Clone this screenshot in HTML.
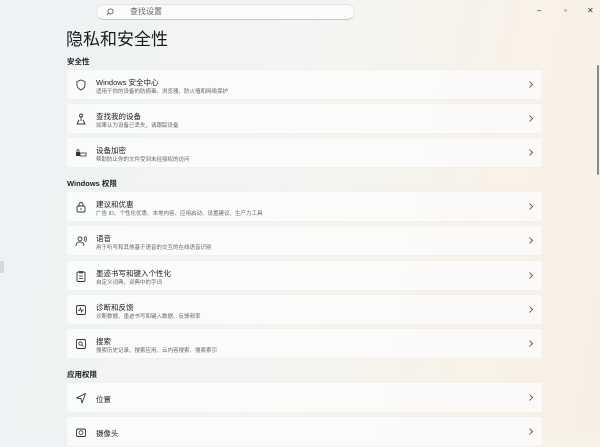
<!DOCTYPE html>
<html><head><meta charset="utf-8"><style>
*{margin:0;padding:0;box-sizing:border-box}
body{width:600px;height:434px;overflow:hidden;font-family:"Liberation Sans","Noto Sans CJK SC",sans-serif;color:#1a1a1a;
background:linear-gradient(100deg,#eef2f5 0%,#f3f4f3 45%,#f8f2e8 80%,#f6efe4 100%);position:relative}
.search{position:absolute;left:96px;top:4px;width:259px;height:16px;background:#fbfbfb;border-radius:8px;border:1px solid #e3e3e3;border-bottom-color:#c9c9c9;font-size:8px;color:#666;padding-left:33px;line-height:14px}
.search svg{position:absolute;left:9px;top:3px}
.wc{position:absolute;top:6px;font-size:8px;color:#333}
h1{position:absolute;left:66px;top:25px;font-size:17px;font-weight:normal;color:#1a1a1a}
.sec{position:absolute;left:67px;font-size:7.5px;font-weight:bold;color:#222}
.card{position:absolute;left:66px;width:477px;height:31px;background:rgba(252,252,252,.85);border-radius:3px;border:1px solid rgba(0,0,0,.04)}
.card .ic{position:absolute;left:8px;top:9px;width:12px;height:12px}
.t{position:absolute;left:29px;top:7px;font-size:7.5px;color:#1a1a1a}
.s{position:absolute;left:29px;top:17px;font-size:5.5px;color:#666}
.t1{top:11px}
.chev{position:absolute;right:9px;top:11px;width:4px;height:7px}
.sb{position:absolute;left:597px;top:65px;width:2px;height:110px;background:#8a8a8a;border-radius:1px}
.nav{position:absolute;left:0;top:261px;width:4px;height:12px;background:#d8d8d8}
</style></head><body>
<div class="search"><svg width="8" height="8" viewBox="0 0 8 8"><circle cx="4.5" cy="3.5" r="2.6" fill="none" stroke="#555" stroke-width=".8"/><path d="M2.6 5.4L.8 7.2" stroke="#555" stroke-width=".8"/></svg>查找设置</div>
<div class="wc" style="left:537px">–</div><div class="wc" style="left:564px">▫</div><div class="wc" style="left:587px">✕</div>
<div class="nav"></div>
<h1>隐私和安全性</h1>
<div class="sec" style="top:56px">安全性</div>
<div class="sec" style="top:178px">Windows 权限</div>
<div class="sec" style="top:369px">应用权限</div>
<div class="sb"></div>

<div class="card" style="top:69px"><svg class="ic" viewBox="0 0 12 12"><path d="M6 1L10 2.5V6C10 8.5 8 10 6 11 4 10 2 8.5 2 6V2.5Z" fill="none" stroke="#333" stroke-width=".9"/></svg><div class="t">Windows 安全中心</div><div class="s">适用于你的设备的防病毒、浏览器、防火墙和网络保护</div><svg class="chev" viewBox="0 0 4 7"><path d="M.5.5L3.5 3.5.5 6.5" fill="none" stroke="#444" stroke-width=".8"/></svg></div>
<div class="card" style="top:103px"><svg class="ic" viewBox="0 0 12 12"><circle cx="6" cy="2.5" r="1.5" fill="none" stroke="#333" stroke-width=".9"/><path d="M6 4V8M2 11H10L8 7M4 7L2 11" fill="none" stroke="#333" stroke-width=".9"/></svg><div class="t">查找我的设备</div><div class="s">如果认为设备已丢失，请跟踪设备</div><svg class="chev" viewBox="0 0 4 7"><path d="M.5.5L3.5 3.5.5 6.5" fill="none" stroke="#444" stroke-width=".8"/></svg></div>
<div class="card" style="top:137px"><svg class="ic" viewBox="0 0 12 12"><rect x="1" y="5" width="4" height="4" fill="#333"/><rect x="5" y="6" width="6" height="3" fill="none" stroke="#333" stroke-width=".8"/><path d="M2 5V3.5A1 1 0 0 1 4 3.5V5" fill="none" stroke="#333" stroke-width=".8"/></svg><div class="t">设备加密</div><div class="s">帮助防止你的文件受到未经授权的访问</div><svg class="chev" viewBox="0 0 4 7"><path d="M.5.5L3.5 3.5.5 6.5" fill="none" stroke="#444" stroke-width=".8"/></svg></div>

<div class="card" style="top:191px"><svg class="ic" viewBox="0 0 12 12"><rect x="2" y="5" width="8" height="6" rx="1.5" fill="none" stroke="#333" stroke-width=".9"/><path d="M4 5V3.5A2 2 0 0 1 8 3.5V5" fill="none" stroke="#333" stroke-width=".9"/><circle cx="6" cy="8" r=".7" fill="#333"/></svg><div class="t">建议和优惠</div><div class="s">广告 ID、个性化优惠、本地内容、应用启动、设置建议、生产力工具</div><svg class="chev" viewBox="0 0 4 7"><path d="M.5.5L3.5 3.5.5 6.5" fill="none" stroke="#444" stroke-width=".8"/></svg></div>
<div class="card" style="top:225px"><svg class="ic" viewBox="0 0 12 12"><circle cx="5" cy="4" r="2" fill="none" stroke="#333" stroke-width=".9"/><path d="M1 11C1 8 3 7 5 7S9 8 9 11M9 2Q10.5 4 9 6M10.5 1Q12.5 4 10.5 7" fill="none" stroke="#333" stroke-width=".8"/></svg><div class="t">语音</div><div class="s">用于听写和其他基于语音的交互的在线语音识别</div><svg class="chev" viewBox="0 0 4 7"><path d="M.5.5L3.5 3.5.5 6.5" fill="none" stroke="#444" stroke-width=".8"/></svg></div>
<div class="card" style="top:260px"><svg class="ic" viewBox="0 0 12 12"><rect x="2" y="2" width="8" height="9.5" rx="1" fill="none" stroke="#333" stroke-width=".9"/><path d="M4.5 1.5H7.5V3H4.5ZM4 6H8M4 8.5H8" fill="none" stroke="#333" stroke-width=".8"/></svg><div class="t">墨迹书写和键入个性化</div><div class="s">自定义词典，词典中的字词</div><svg class="chev" viewBox="0 0 4 7"><path d="M.5.5L3.5 3.5.5 6.5" fill="none" stroke="#444" stroke-width=".8"/></svg></div>
<div class="card" style="top:294px"><svg class="ic" viewBox="0 0 12 12"><rect x="1.5" y="1.5" width="9" height="9" rx="1.5" fill="none" stroke="#333" stroke-width=".9"/><path d="M3 6.5H4.5L5.5 4 6.5 8 7.5 6H9" fill="none" stroke="#333" stroke-width=".8"/></svg><div class="t">诊断和反馈</div><div class="s">诊断数据、墨迹书写和键入数据、反馈频率</div><svg class="chev" viewBox="0 0 4 7"><path d="M.5.5L3.5 3.5.5 6.5" fill="none" stroke="#444" stroke-width=".8"/></svg></div>
<div class="card" style="top:328px"><svg class="ic" viewBox="0 0 12 12"><rect x="1.5" y="1.5" width="9" height="9" rx="1.5" fill="none" stroke="#333" stroke-width=".9"/><circle cx="5.5" cy="5.5" r="1.7" fill="none" stroke="#333" stroke-width=".8"/><path d="M6.7 6.7L8.5 8.5" stroke="#333" stroke-width=".8"/></svg><div class="t">搜索</div><div class="s">搜索历史记录、搜索应用、云内容搜索、搜索索引</div><svg class="chev" viewBox="0 0 4 7"><path d="M.5.5L3.5 3.5.5 6.5" fill="none" stroke="#444" stroke-width=".8"/></svg></div>

<div class="card" style="top:382px"><svg class="ic" viewBox="0 0 12 12"><path d="M10.5 1.5L1.5 6 6 6.5 7 11Z" fill="none" stroke="#333" stroke-width=".9" stroke-linejoin="round"/></svg><div class="t t1">位置</div><svg class="chev" viewBox="0 0 4 7"><path d="M.5.5L3.5 3.5.5 6.5" fill="none" stroke="#444" stroke-width=".8"/></svg></div>
<div class="card" style="top:416px"><svg class="ic" viewBox="0 0 12 12"><rect x="1.5" y="3" width="9" height="7.5" rx="1.5" fill="none" stroke="#333" stroke-width=".9"/><circle cx="6" cy="6.7" r="2" fill="none" stroke="#333" stroke-width=".8"/></svg><div class="t t1">摄像头</div><svg class="chev" viewBox="0 0 4 7"><path d="M.5.5L3.5 3.5.5 6.5" fill="none" stroke="#444" stroke-width=".8"/></svg></div>
</body></html>
